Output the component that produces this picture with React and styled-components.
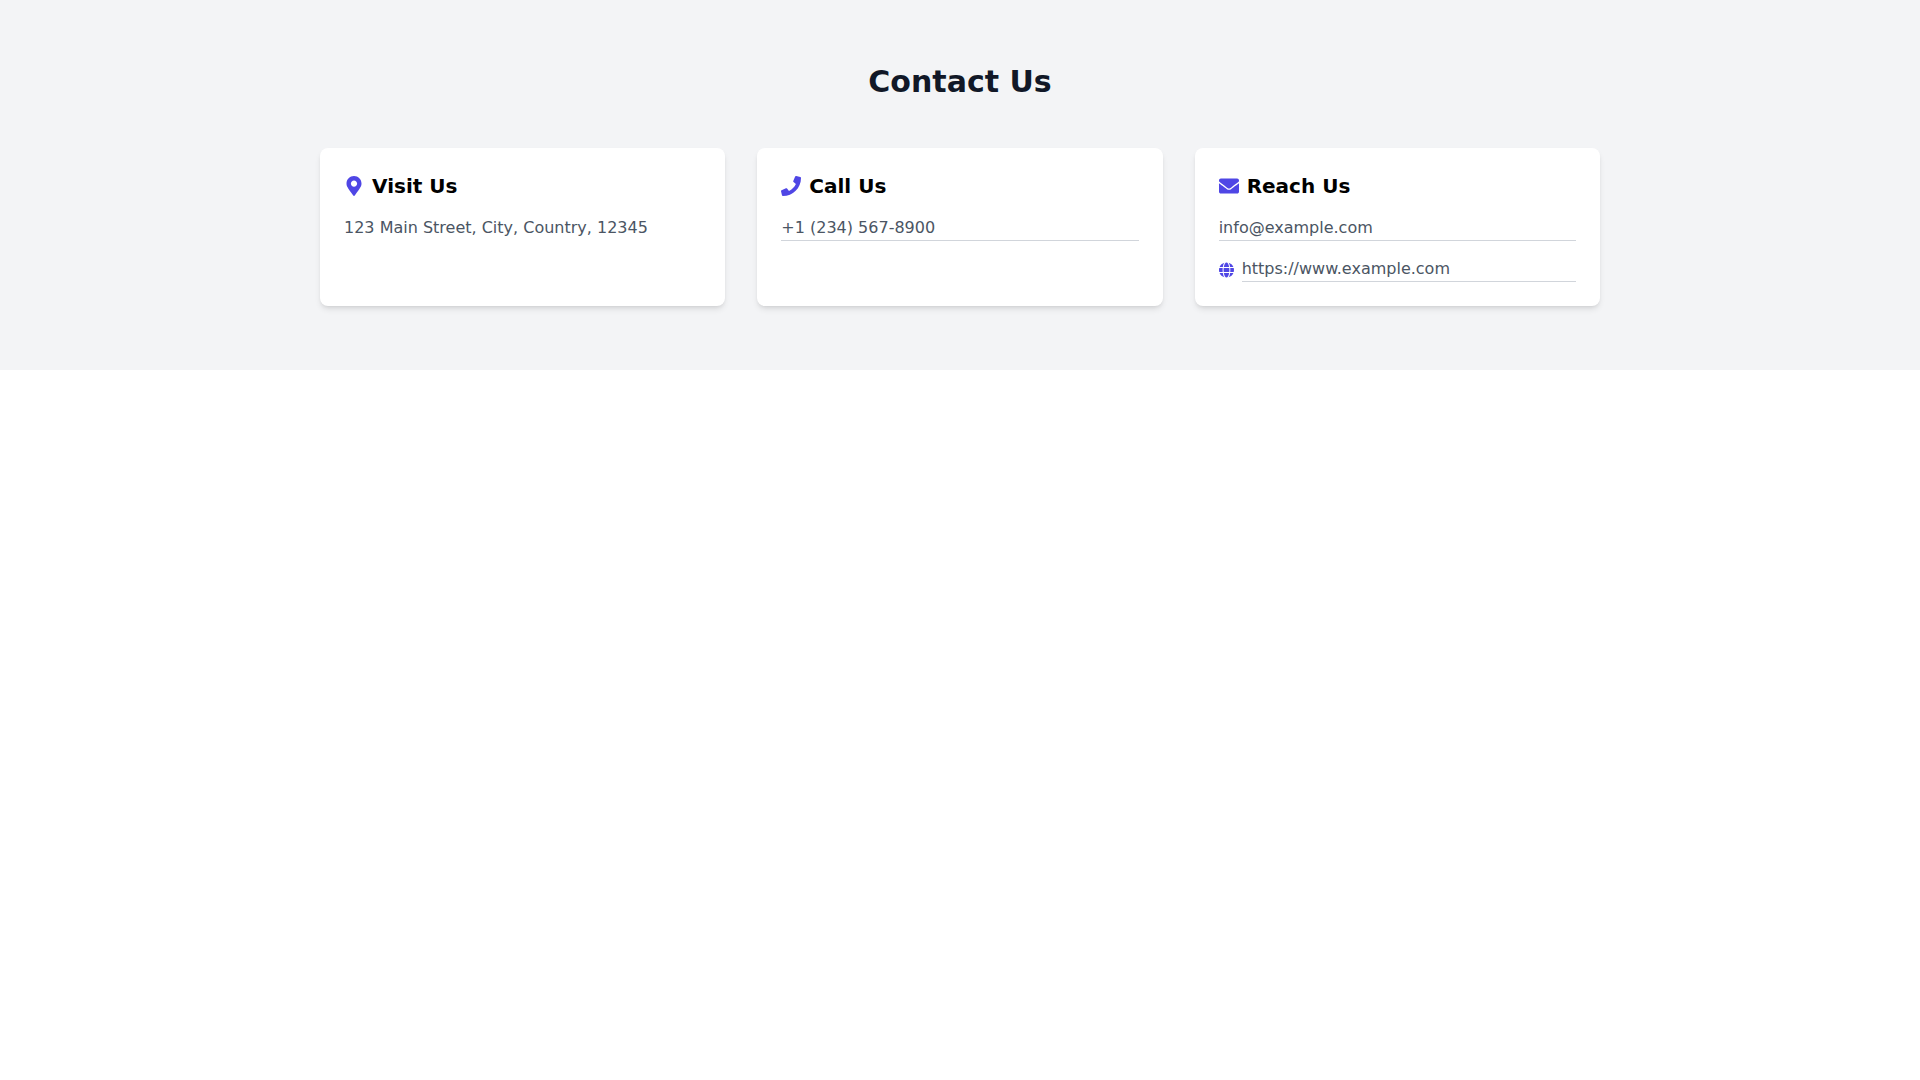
import React, { useState } from 'react'
import styled, { createGlobalStyle } from 'styled-components'
import { FaEnvelope, FaGlobe, FaMapMarkerAlt, FaPhone } from 'react-icons/fa'

const GlobalStyle = createGlobalStyle`
    *, *::before, *::after {
        box-sizing: border-box;
    }

    body {
        margin: 0;
        background: #ffffff;
        color: #000000;
        font-family: 'DejaVu Sans', sans-serif;
        font-size: 16px;
        line-height: 24px;
    }
`

const Section = styled.section`
    padding: 64px 32px;
    background: #f3f4f6;
`

const Container = styled.div`
    max-width: 1280px;
    margin: 0 auto;
`

const Title = styled.h2`
    margin: 0 0 48px;
    color: #111827;
    font-size: 30px;
    font-weight: 700;
    line-height: 36px;
    text-align: center;
`

const CardGrid = styled.div`
    display: grid;
    grid-template-columns: 1fr;
    gap: 32px;

    @media (min-width: 768px) {
        grid-template-columns: repeat(3, minmax(0, 1fr));
    }
`

const Card = styled.div`
    padding: 24px;
    border-radius: 8px;
    background: #ffffff;
    box-shadow: 0 4px 6px -1px rgba(0, 0, 0, 0.1), 0 2px 4px -2px rgba(0, 0, 0, 0.1);
`

const CardTitle = styled.h3`
    display: flex;
    align-items: center;
    gap: 8px;
    margin: 0 0 16px;
    font-size: 20px;
    font-weight: 600;
    line-height: 28px;

    & svg {
        color: #4f46e5;
    }
`

const Address = styled.p`
    margin: 0;
    color: #4b5563;
`

const Field = styled.input`
    display: block;
    width: 100%;
    min-width: 0;
    padding: 0 0 1px;
    border: 0;
    border-bottom: 1px solid #d1d5db;
    border-radius: 0;
    outline: none;
    background: transparent;
    color: #4b5563;
    font: inherit;
    line-height: 23px;

    &:focus {
        border-color: #4f46e5;
    }
`

const WebsiteRow = styled.div`
    display: flex;
    align-items: center;
    gap: 8px;
    margin-top: 16px;

    & svg {
        color: #4f46e5;
    }
`

const App = () => {
    const [contact, setContact] = useState({
        phone: '+1 (234) 567-8900',
        email: 'info@example.com',
        website: 'https://www.example.com',
    })

    const handleChange = e => setContact({ ...contact, [e.target.name]: e.target.value })

    return (
        <>
            <GlobalStyle />
            <Section>
                <Container>
                    <Title>Contact Us</Title>
                    <CardGrid>
                        <Card>
                            <CardTitle><FaMapMarkerAlt />Visit Us</CardTitle>
                            <Address>123 Main Street, City, Country, 12345</Address>
                        </Card>
                        <Card>
                            <CardTitle><FaPhone />Call Us</CardTitle>
                            <Field
                                type='tel'
                                name='phone'
                                aria-label='Phone'
                                value={contact.phone}
                                onChange={handleChange}
                            />
                        </Card>
                        <Card>
                            <CardTitle><FaEnvelope />Reach Us</CardTitle>
                            <Field
                                type='email'
                                name='email'
                                aria-label='Email'
                                value={contact.email}
                                onChange={handleChange}
                            />
                            <WebsiteRow>
                                <FaGlobe />
                                <Field
                                    type='url'
                                    name='website'
                                    aria-label='Website'
                                    value={contact.website}
                                    onChange={handleChange}
                                />
                            </WebsiteRow>
                        </Card>
                    </CardGrid>
                </Container>
            </Section>
        </>
    )
}

export default App
